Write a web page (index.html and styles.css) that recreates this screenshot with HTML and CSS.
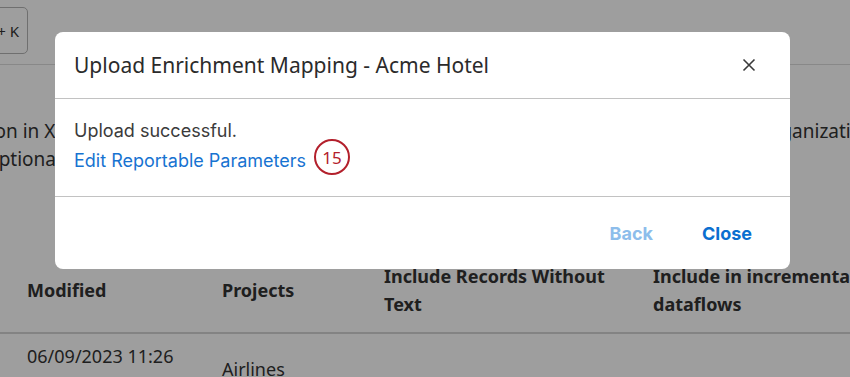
FILE: index.html
```html
<!DOCTYPE html>
<html>
<head>
<meta charset="utf-8">
<link rel="stylesheet" href="styles.css">
</head>
<body>
<div class="page">
  <div class="toolbar">
    <button class="kbd-btn">Ctrl + K</button>
  </div>
  <div class="desc">
    <div class="desc-line">
      <span class="desc-left first">Upload a mapping file with each enrichment option in XLSX format</span>
      <span class="desc-right">for the organization</span>
    </div>
    <div class="desc-line">
      <span class="desc-left second">Columns marked as optional can be left empty.</span>
    </div>
  </div>
  <table class="grid">
    <thead>
      <tr>
        <th class="c1">Modified</th>
        <th class="c2">Projects</th>
        <th class="c3">Include Records Without Text</th>
        <th class="c4">Include in incremental dataflows</th>
      </tr>
    </thead>
    <tbody>
      <tr>
        <td class="c1">06/09/2023 11:26 AM</td>
        <td class="c2">Airlines</td>
        <td class="c3"></td>
        <td class="c4"></td>
      </tr>
    </tbody>
  </table>
</div>
<div class="overlay"></div>
<div class="modal" role="dialog">
  <div class="modal-header">
    <h2 class="modal-title">Upload Enrichment Mapping - Acme Hotel</h2>
    <button class="icon-btn" aria-label="Close">
      <svg width="14" height="14" viewBox="0 0 14 14"><path d="M1.5 1.5 L12.5 12.5 M12.5 1.5 L1.5 12.5" stroke="#3a3a3a" stroke-width="1.6" fill="none"/></svg>
    </button>
  </div>
  <div class="modal-body">
    <p class="msg">Upload successful.</p>
    <div class="link-row">
      <a class="link" href="#">Edit Reportable Parameters</a>
      <span class="callout">15</span>
    </div>
  </div>
  <div class="modal-footer">
    <button class="btn btn-disabled">Back</button>
    <button class="btn btn-primary">Close</button>
  </div>
</div>
</body>
</html>
```
FILE: styles.css
```css
* { box-sizing: border-box; }
html, body {
  margin: 0;
  padding: 0;
  width: 850px;
  height: 377px;
  overflow: hidden;
  background: #ffffff;
}
body {
  font-family: "Noto Sans", "Open Sans", sans-serif;
  color: #333333;
  position: relative;
}
.page {
  width: 850px;
}
.toolbar {
  height: 65px;
  border-bottom: 1px solid #dcdcdc;
  padding-top: 7px;
}
.kbd-btn {
  margin-left: -46px;
  height: 47px;
  width: 74px;
  border: 1px solid #b4b4b4;
  border-radius: 5px;
  background: #ffffff;
  font-family: "Noto Sans", sans-serif;
  font-size: 15px;
  color: #333;
  padding: 0 8px 0 0;
  text-align: right;
}
.desc {
  padding-top: 52px;
  height: 197px;
  font-size: 19px;
  line-height: 28px;
}
.desc-line {
  display: flex;
  justify-content: space-between;
  white-space: nowrap;
}
.desc-left.first { margin-left: -441px; }
.desc-left.second { margin-left: -195px; }
.desc-right { margin-right: -24px; }
.grid {
  border-collapse: collapse;
  width: 900px;
  table-layout: fixed;
  font-size: 18px;
}
.grid th {
  text-align: left;
  font-weight: 700;
  line-height: 28px;
  height: 68px;
  padding: 0 0 14px 0;
  vertical-align: middle;
  border-bottom: 2px solid #d4d4d4;
}
.grid td {
  padding: 8px 0 0 0;
  line-height: 28px;
  vertical-align: top;
}
.grid td.c2 { padding-top: 21px; }
.grid .c1 { width: 222px; padding-left: 27px; padding-right: 40px; }
.grid .c2 { width: 162px; }
.grid .c3 { width: 269px; padding-right: 30px; }
.grid .c4 { width: 247px; padding-right: 0; }

.overlay {
  position: absolute;
  inset: 0;
  background: rgba(0, 0, 0, 0.38);
}
.modal {
  position: absolute;
  left: 55px;
  top: 32px;
  width: 735px;
  background: #ffffff;
  border-radius: 8px;
  font-family: "Inter", "Liberation Sans", sans-serif;
}
.modal-header {
  height: 67px;
  display: flex;
  align-items: center;
  justify-content: space-between;
  padding: 0 34px 0 19px;
  border-bottom: 1px solid #c2c2c2;
}
.modal-title {
  margin: 0;
  font-family: "Noto Sans", sans-serif;
  font-weight: 400;
  font-size: 21px;
  color: #2b2b2b;
}
.icon-btn {
  border: 0;
  background: none;
  padding: 0;
  width: 14px;
  height: 14px;
  display: flex;
}
.modal-body {
  height: 98px;
  padding: 20px 19px 0;
  border-bottom: 1px solid #c2c2c2;
}
.msg {
  margin: 0;
  font-size: 18px;
  line-height: 24px;
  color: #3b3b3b;
}
.link-row {
  display: flex;
  align-items: flex-start;
  gap: 8px;
  margin-top: -4px;
}
.link {
  font-size: 18px;
  line-height: 24px;
  margin-top: 10px;
  color: #1773d1;
  text-decoration: none;
}
.callout {
  width: 36px;
  height: 36px;
  border: 2px solid #b3202c;
  border-radius: 50%;
  color: #b3202c;
  font-family: "Noto Sans", sans-serif;
  font-size: 17px;
  display: flex;
  align-items: center;
  justify-content: center;
}
.modal-footer {
  height: 72px;
  display: flex;
  align-items: center;
  justify-content: flex-end;
  gap: 49px;
  padding: 0 38px 0 0;
}
.btn {
  border: 0;
  background: none;
  padding: 0;
  font-family: "Inter", "Liberation Sans", sans-serif;
  font-weight: 700;
  font-size: 18px;
}
.btn-disabled { color: #8dbdeb; }
.btn-primary { color: #0b6fd0; }
```
